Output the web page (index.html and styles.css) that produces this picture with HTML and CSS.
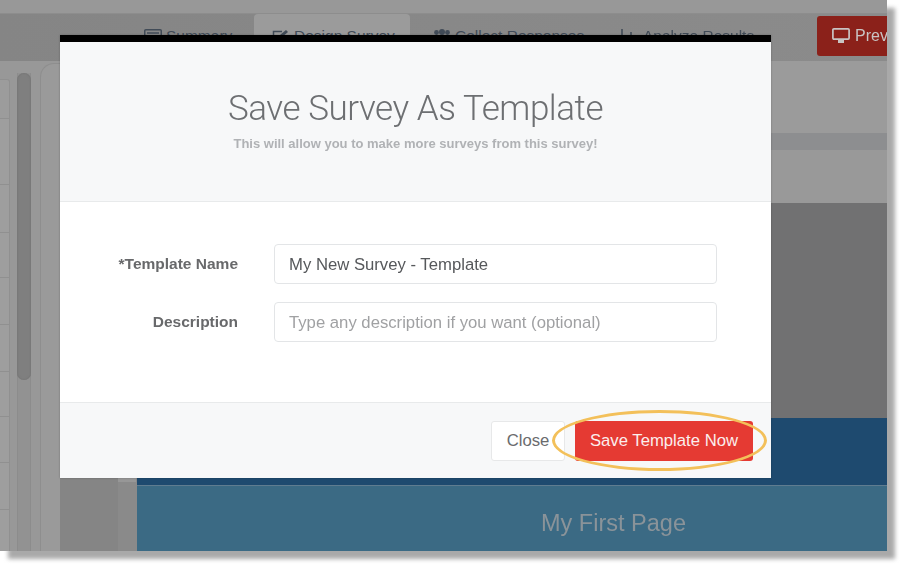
FILE: index.html
```html
<!DOCTYPE html>
<html lang="en">
<head>
<meta charset="utf-8">
<title>Save Survey As Template</title>
<link rel="stylesheet" href="styles.css">
</head>
<body>
<div class="stage">
  <div class="app">
    <div class="topbar"></div>
    <nav class="nav">
      <a class="tab tab-summary">
        <svg class="ico" viewBox="0 0 18 14"><rect x="0.75" y="0.75" width="16.5" height="12.5" rx="1" fill="none" stroke="currentColor" stroke-width="1.5"/><path d="M3 4h12M3 7h12M3 10h12" stroke="currentColor" stroke-width="1.4"/></svg>Summary</a>
      <a class="tab tab-design">
        <svg class="ico" viewBox="0 0 18 14"><path d="M13 8v4.2H1.5V2.5H10" fill="none" stroke="currentColor" stroke-width="1.5"/><path d="M7 9l1-3 6-5 2 2-6 5z" fill="currentColor"/></svg>Design Survey</a>
      <a class="tab tab-collect">
        <svg class="ico" viewBox="0 0 18 14"><circle cx="3.5" cy="3.5" r="2.4" fill="currentColor"/><circle cx="9" cy="3" r="3" fill="currentColor"/><circle cx="14.5" cy="3.5" r="2.4" fill="currentColor"/><path d="M0 10c0-3 7-3 7 0v3H0zM11 10c0-3 7-3 7 0v3h-7z M5 9c0-3 8-3 8 0v5H5z" fill="currentColor"/></svg>Collect Responses</a>
      <a class="tab tab-analyze">
        <svg class="ico" viewBox="0 0 18 14"><path d="M1 0v14M6 6v8M10 3v11M14 8v6" stroke="currentColor" stroke-width="1.6"/></svg>Analyze Results</a>
      <a class="preview">
        <svg class="ico-monitor" viewBox="0 0 18 16"><rect x="0.9" y="0.9" width="16.2" height="10.2" rx="1" fill="none" stroke="currentColor" stroke-width="1.7"/><path d="M6 15h6v-3H6z" fill="currentColor"/></svg>Preview</a>
    </nav>
    <div class="workspace">
      <aside class="side">
        <div class="side-list">
          <div class="side-row h40"></div><div class="side-row h66"></div><div class="side-row h48"></div>
          <div class="side-row h45"></div><div class="side-row h47"></div><div class="side-row h47"></div>
          <div class="side-row h45"></div><div class="side-row h46"></div><div class="side-row h47"></div>
          <div class="side-row h45"></div>
        </div>
        <div class="track"><div class="thumb"></div></div>
        <div class="panel-edge"></div>
        <div class="side-fill"><div class="grain"></div></div>
      </aside>
      <main class="main">
        <div class="m-a"></div>
        <div class="m-band"></div>
        <div class="m-b"></div>
        <div class="m-dark"></div>
        <div class="m-navy"></div>
        <div class="m-page">My First Page</div>
      </main>
    </div>
  </div>

  <section class="modal">
    <header class="modal-head">
      <h1 class="modal-title">Save Survey As Template</h1>
      <p class="modal-sub">This will allow you to make more surveys from this survey!</p>
    </header>
    <form class="modal-body">
      <label class="field-label" for="tn">*Template Name</label>
      <input class="field-input" id="tn" type="text" value="My New Survey - Template">
      <label class="field-label" for="td">Description</label>
      <input class="field-input" id="td" type="text" placeholder="Type any description if you want (optional)">
    </form>
    <footer class="modal-foot">
      <button class="btn btn-close" type="button">Close</button>
      <button class="btn btn-save" type="button">Save Template Now</button>
    </footer>
  </section>
  <div class="callout"></div>
</div>
</body>
</html>
```

FILE: styles.css
```css
* { box-sizing: border-box; }
html, body { margin: 0; padding: 0; background: #fff; }
body {
  position: relative;
  width: 920px;
  height: 574px;
  overflow: hidden;
  font-family: "Liberation Sans", Arial, sans-serif;
}
body::before {
  content: "";
  position: absolute;
  left: 8px;
  top: 8px;
  width: 887px;
  height: 551px;
  background: #a9a9a9;
  filter: blur(2px);
}

.stage {
  position: relative;
  width: 887px;
  height: 551px;
  overflow: hidden;
}

.app { display: flex; flex-direction: column; width: 887px; height: 551px; background: #979797; }
.topbar { height: 13px; background: #989898; flex: none; }

.nav {
  position: relative;
  flex: none;
  height: 48px;
  display: flex;
  align-items: flex-start;
  background: linear-gradient(90deg, #858585, #8b8b8b);
  border-top: 1px solid #8d8d8d;
  color: #414b57;
  font-size: 15.5px;
  filter: blur(0.5px);
}
.tab { display: flex; align-items: center; gap: 4px; height: 44px; white-space: nowrap; }
.ico { width: 18px; height: 14px; flex: none; }
.tab-summary { margin-left: 144px; width: 110px; }
.tab-design { width: 156px; height: 46px; padding: 0 0 2px 18px; margin-top: 0; background: #9b9b9b; border-radius: 4px 4px 0 0; }
.tab-collect { width: 189px; padding-left: 23px; }
.tab-analyze { width: 196px; padding-left: 22px; }
.preview {
  position: absolute;
  left: 817px;
  top: 2px;
  width: 90px;
  height: 40px;
  display: flex;
  align-items: center;
  gap: 5px;
  padding-left: 15px;
  background: #8b211a;
  border-radius: 3px;
  color: #c9c4c3;
  font-size: 16px;
}
.ico-monitor { width: 18px; height: 16px; flex: none; }

.workspace { flex: 1; display: flex; min-height: 0; }
.side { flex: none; width: 136px; display: flex; position: relative; background: #989898; }
.side-list { flex: none; width: 10px; padding-top: 18px; overflow: hidden; }
.side-row { border: 1px solid #909090; border-left: 0; border-top: 0; background: #9e9e9e; }
.h40 { height: 40px; border-top: 1px solid #909090; border-radius: 0 3px 0 0; background: #9c9c9c; }
.h45 { height: 45px; }
.h46 { height: 46px; }
.h47 { height: 47px; }
.h48 { height: 48px; }
.h66 { height: 66px; }
.track {
  flex: none;
  width: 14px;
  margin: 12px 0 0 7px;
  background: #929292;
  border-left: 1px solid #8c8c8c;
  border-right: 1px solid #8c8c8c;
}
.thumb {
  width: 14px;
  margin-left: -1px;
  height: 307px;
  border-radius: 7px;
  background: #7f7f7f;
  box-shadow: inset 0 0 2px #6c6c6c;
}
.panel-edge {
  flex: none;
  width: 20px;
  margin: 2px 0 0 9px;
  border: 1px solid #8e8e8e;
  border-right: 0;
  border-bottom: 0;
  border-radius: 14px 0 0 0;
  background: #9a9a9a;
}
.side-fill {
  flex: 1;
  display: flex;
  align-items: flex-end;
  background: linear-gradient(#979797 86%, #8a8a8a 86%);
}
.grain { width: 58px; height: 73px; background: #858585; }

.main { flex: 1; display: flex; flex-direction: column; min-width: 0; border-left: 1px solid #8a8a8a; }
.m-a { height: 72px; background: #9b9b9b; flex: none; }
.m-band { height: 17px; background: #8d8e90; flex: none; }
.m-b { height: 53px; background: #999; flex: none; }
.m-dark { height: 215px; background: #717172; flex: none; }
.m-navy { height: 68px; background: #1e4a6f; border-bottom: 1px solid #5f7c90; flex: none; }
.m-page {
  flex: 1;
  display: flex;
  align-items: center;
  justify-content: center;
  padding: 9px 0 0 203px;
  background: #3b6a84;
  color: #8a9399;
  font-size: 23.5px;
  filter: blur(0.3px);
}

.modal {
  position: absolute;
  left: 60px;
  top: 35px;
  width: 711px;
  height: 443px;
  display: flex;
  flex-direction: column;
  border-top: 7px solid #000;
  background: #fff;
  box-shadow: 0 0 2px rgba(0,0,0,.25);
}
.modal-head {
  flex: none;
  height: 160px;
  padding-top: 45px;
  background: #f7f8f9;
  border-bottom: 1px solid #e8eaeb;
  text-align: center;
}
.modal-title {
  margin: 0;
  font-family: "Roboto", sans-serif;
  font-weight: 300;
  font-size: 35px;
  line-height: 44px;
  letter-spacing: -0.45px;
  color: #6d6f72;
  filter: blur(0.3px);
}
.modal-sub {
  margin: 5px 0 0;
  font-size: 13px;
  line-height: 16px;
  font-weight: 700;
  color: #b0b2b5;
  filter: blur(0.3px);
}
.modal-body {
  flex: none;
  height: 200px;
  display: grid;
  grid-template-columns: 178px 443px;
  grid-auto-rows: 40px;
  column-gap: 36px;
  row-gap: 18px;
  align-items: center;
  padding-top: 42px;
  background: #fff;
}
.field-label {
  text-align: right;
  font-size: 15.5px;
  font-weight: 700;
  color: #68696b;
  filter: blur(0.3px);
}
.field-input {
  width: 443px;
  height: 40px;
  padding: 1px 14px 0;
  border: 1px solid #e3e5e7;
  border-radius: 4px;
  background: #fff;
  font-family: "Liberation Sans", Arial, sans-serif;
  font-size: 16.7px;
  color: #56585b;
  outline: none;
  filter: blur(0.25px);
}
.field-input::placeholder { color: #a0a1a3; opacity: 1; }
.modal-foot {
  flex: 1;
  display: flex;
  align-items: center;
  justify-content: flex-end;
  gap: 10px;
  padding: 0 18px 0 0;
  background: #f7f8f9;
  border-top: 1px solid #e8eaeb;
}
.btn {
  height: 40px;
  border-radius: 3px;
  font-family: "Liberation Sans", Arial, sans-serif;
  font-size: 16.7px;
  padding: 0;
}
.btn-close { width: 74px; background: #fff; border: 1px solid #e7e8e9; color: #6a6b6d; }
.btn-save { width: 178px; background: #e53a33; border: 0; color: #fbeeed; }

.callout {
  position: absolute;
  left: 552px;
  top: 410px;
  width: 215px;
  height: 61px;
  border: 3px solid #f3c05a;
  border-radius: 50%;
}
```
